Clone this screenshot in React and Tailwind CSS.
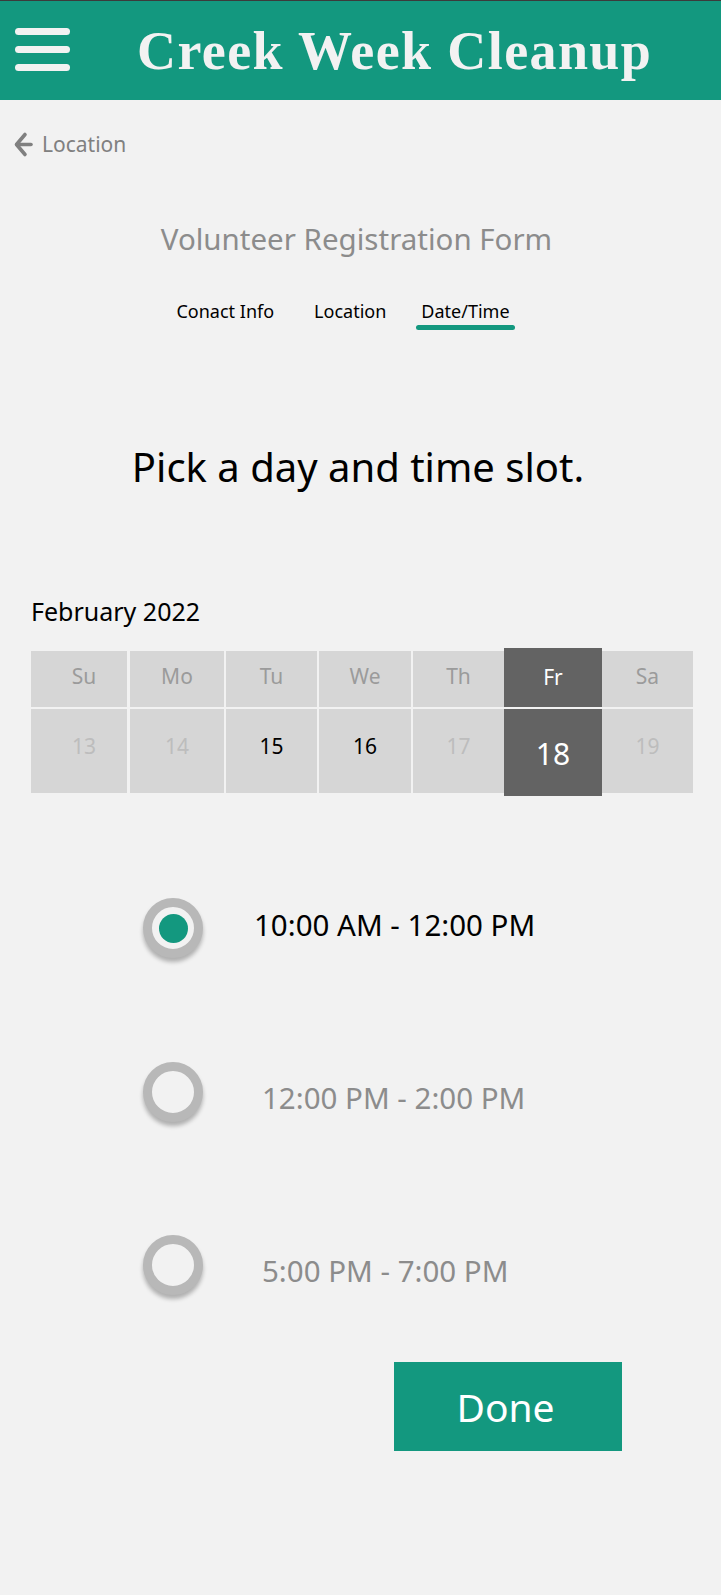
import React from "react";

const TEAL = "bg-[#13987f]";

function Radio({ checked }) {
  return (
    <div className="w-[60px] h-[60px] shrink-0 rounded-full border-[9px] border-[#b8b8b8] bg-[#f2f2f2] shadow-[0_4px_4px_rgba(0,0,0,0.28)] flex items-center justify-center">
      {checked && <div className="w-[29px] h-[29px] rounded-full bg-[#13987f]" />}
    </div>
  );
}

const days = [
  { d: "Su", n: "13", w: "w-[96px]", ml: "", state: "off", pad: "pl-[10px]" },
  { d: "Mo", n: "14", w: "w-[94px]", ml: "ml-[3px]", state: "off", pad: "" },
  { d: "Tu", n: "15", w: "w-[91px]", ml: "ml-[2px]", state: "on", pad: "" },
  { d: "We", n: "16", w: "w-[92px]", ml: "ml-[2px]", state: "on", pad: "" },
  { d: "Th", n: "17", w: "w-[91px]", ml: "ml-[2px]", state: "off", pad: "" },
  { d: "Fr", n: "18", w: "w-[98px]", ml: "", state: "sel", pad: "" },
  { d: "Sa", n: "19", w: "w-[91px]", ml: "", state: "off", pad: "" },
];

export default function App() {
  return (
    <div className="min-h-[1595px] bg-[#f2f2f2] font-['Noto_Sans',sans-serif]">
      {/* Header */}
      <div className={`h-[100px] border-t border-[#3b3b3b] ${TEAL} flex items-center`}>
        <div className="ml-[15px] w-[55px] flex flex-col gap-[11px] -mt-[3px]">
          <div className="h-[7px] rounded-full bg-[#f2f2f2]" />
          <div className="h-[7px] rounded-full bg-[#f2f2f2]" />
          <div className="h-[7px] rounded-full bg-[#f2f2f2]" />
        </div>
        <div className="ml-[67px] font-['Liberation_Serif',serif] font-bold text-[54px] leading-none tracking-[1.4px] text-[#f2f2f2]">
          Creek Week Cleanup
        </div>
      </div>

      {/* Back link */}
      <div className="mt-[28px] h-[32px] flex items-center pl-[14px] text-[#808080]">
        <svg width="19" height="27" viewBox="0 0 19 27" fill="none" stroke="#808080" strokeWidth="3.6" strokeLinecap="round" strokeLinejoin="round">
          <path d="M17 13.5H3" />
          <path d="M11 3.5L2.5 13.5L11 23.5" />
        </svg>
        <span className="ml-[9px] text-[21px] leading-none">Location</span>
      </div>

      {/* Form title */}
      <div className="mt-[59px] h-[40px] flex items-center justify-center pr-[8px] text-[29.5px] leading-none text-[#8c8c8c]">
        Volunteer Registration Form
      </div>

      {/* Tabs */}
      <div className="mt-[40px] flex justify-center pr-[30px] text-[18px] text-black">
        <div className="flex flex-col items-center">
          <span className="leading-[24px]">Conact Info</span>
          <div className="mt-[2px] h-[5px]" />
        </div>
        <div className="ml-[40px] flex flex-col items-center">
          <span className="leading-[24px]">Location</span>
          <div className="mt-[2px] h-[5px]" />
        </div>
        <div className="ml-[30px] flex flex-col items-stretch">
          <span className="leading-[24px] px-[5px]">Date/Time</span>
          <div className="mt-[2px] h-[5px] rounded-full bg-[#13987f]" />
        </div>
      </div>

      {/* Prompt */}
      <div className="mt-[113px] h-[48px] flex items-center justify-center pr-[5px] text-[40px] leading-[48px] text-black">
        Pick a day and time slot.
      </div>

      {/* Month */}
      <div className="mt-[104px] pl-[31px] text-[25px] leading-[32px] text-black">February 2022</div>

      {/* Calendar */}
      <div className="mt-[21px] pl-[31px] flex">
        {days.map((c) =>
          c.state === "sel" ? (
            <div key={c.d} className={`${c.w} ${c.ml} flex flex-col`}>
              <div className="h-[59px] bg-[#636363] flex items-center justify-center text-[21px] leading-none text-white">
                {c.d}
              </div>
              <div className="mt-[2px] h-[87px] bg-[#636363] flex items-center justify-center pt-[3px] text-[30px] leading-none text-white">
                {c.n}
              </div>
            </div>
          ) : (
            <div key={c.d} className={`${c.w} ${c.ml} pt-[3px] flex flex-col`}>
              <div className={`h-[56px] bg-[#d6d6d6] flex items-center justify-center pb-[5px] ${c.pad} text-[21px] leading-none text-[#9b9b9b]`}>
                {c.d}
              </div>
              <div
                className={`mt-[2px] h-[84px] bg-[#d6d6d6] flex items-center justify-center pb-[9px] ${c.pad} text-[21px] leading-none ${
                  c.state === "on" ? "text-black" : "text-[#bdbdbd]"
                }`}
              >
                {c.n}
              </div>
            </div>
          )
        )}
      </div>

      {/* Time slots */}
      <div className="mt-[102px] pl-[143px] flex items-center">
        <Radio checked />
        <span className="ml-[51px] pb-[6px] text-[29.5px] leading-none text-black">10:00 AM - 12:00 PM</span>
      </div>
      <div className="mt-[104px] pl-[143px] flex items-center">
        <Radio />
        <span className="ml-[59px] pt-[12px] text-[29.5px] leading-none text-[#8c8c8c]">12:00 PM - 2:00 PM</span>
      </div>
      <div className="mt-[113px] pl-[143px] flex items-center">
        <Radio />
        <span className="ml-[59px] pt-[12px] text-[29.5px] leading-none text-[#8c8c8c]">5:00 PM - 7:00 PM</span>
      </div>

      {/* Done */}
      <div className="mt-[67px] flex justify-end pr-[99px]">
        <button className="w-[228px] h-[89px] bg-[#13987f] text-white text-[39px] leading-none flex items-center justify-center pr-[5px]">
          Done
        </button>
      </div>
    </div>
  );
}
